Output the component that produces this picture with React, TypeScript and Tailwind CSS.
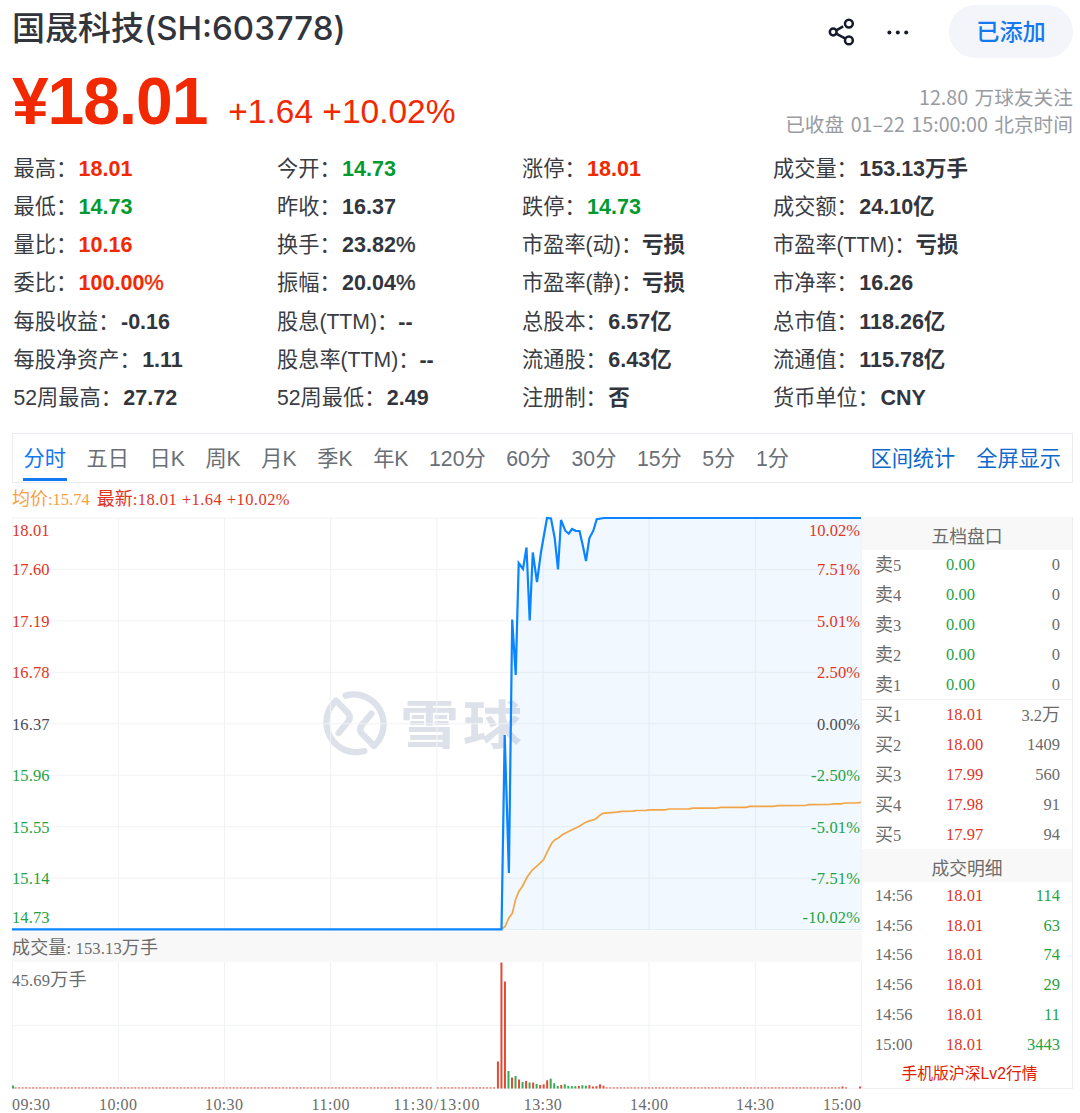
import React from 'react';
import clsx from 'clsx';

type Tone = 'up' | 'down' | 'flat';

interface Stat {
  label: string;
  value: string;
  tone?: Tone;
}

const columns: { width: string; items: Stat[] }[] = [
  {
    width: 'w-[263.5px]',
    items: [
      { label: '最高', value: '18.01', tone: 'up' },
      { label: '最低', value: '14.73', tone: 'down' },
      { label: '量比', value: '10.16', tone: 'up' },
      { label: '委比', value: '100.00%', tone: 'up' },
      { label: '每股收益', value: '-0.16' },
      { label: '每股净资产', value: '1.11' },
      { label: '52周最高', value: '27.72' },
    ],
  },
  {
    width: 'w-[245px]',
    items: [
      { label: '今开', value: '14.73', tone: 'down' },
      { label: '昨收', value: '16.37' },
      { label: '换手', value: '23.82%' },
      { label: '振幅', value: '20.04%' },
      { label: '股息(TTM)', value: '--' },
      { label: '股息率(TTM)', value: '--' },
      { label: '52周最低', value: '2.49' },
    ],
  },
  {
    width: 'w-[251px]',
    items: [
      { label: '涨停', value: '18.01', tone: 'up' },
      { label: '跌停', value: '14.73', tone: 'down' },
      { label: '市盈率(动)', value: '亏损' },
      { label: '市盈率(静)', value: '亏损' },
      { label: '总股本', value: '6.57亿' },
      { label: '流通股', value: '6.43亿' },
      { label: '注册制', value: '否' },
    ],
  },
  {
    width: 'w-[290px]',
    items: [
      { label: '成交量', value: '153.13万手' },
      { label: '成交额', value: '24.10亿' },
      { label: '市盈率(TTM)', value: '亏损' },
      { label: '市净率', value: '16.26' },
      { label: '总市值', value: '118.26亿' },
      { label: '流通值', value: '115.78亿' },
      { label: '货币单位', value: 'CNY' },
    ],
  },
];

const tabs = ['分时', '五日', '日K', '周K', '月K', '季K', '年K', '120分', '60分', '30分', '15分', '5分', '1分'];

const asks = ['5', '4', '3', '2', '1'];
const bids = [
  { level: '1', price: '18.01', volume: '3.2', unit: '万' },
  { level: '2', price: '18.00', volume: '1409' },
  { level: '3', price: '17.99', volume: '560' },
  { level: '4', price: '17.98', volume: '91' },
  { level: '5', price: '17.97', volume: '94' },
];

const trades = [
  { time: '14:56', price: '18.01', volume: '114' },
  { time: '14:56', price: '18.01', volume: '63' },
  { time: '14:56', price: '18.01', volume: '74' },
  { time: '14:56', price: '18.01', volume: '29' },
  { time: '14:56', price: '18.01', volume: '11' },
  { time: '15:00', price: '18.01', volume: '3443' },
];

const RED = '#e0351f';
const GREEN = '#1fa342';
const GRAY = '#6b6b6b';

const levels = [
  { y: 530.5, price: '18.01', pct: '10.02%', w: 51, color: RED },
  { y: 569.5, price: '17.60', pct: '7.51%', w: 43, color: RED },
  { y: 621, price: '17.19', pct: '5.01%', w: 43, color: RED },
  { y: 672.5, price: '16.78', pct: '2.50%', w: 43, color: RED },
  { y: 724, price: '16.37', pct: '0.00%', w: 43, color: '#4a4d55' },
  { y: 775.5, price: '15.96', pct: '-2.50%', w: 49, color: GREEN },
  { y: 827, price: '15.55', pct: '-5.01%', w: 49, color: GREEN },
  { y: 878.5, price: '15.14', pct: '-7.51%', w: 49, color: GREEN },
  { y: 917, price: '14.73', pct: '-10.02%', w: 57.5, color: GREEN },
];

const times = [
  { x: 12, label: '09:30', anchor: 'start', w: 38 },
  { x: 118, label: '10:00', anchor: 'middle', w: 38 },
  { x: 224, label: '10:30', anchor: 'middle', w: 38 },
  { x: 330.5, label: '11:00', anchor: 'middle', w: 38 },
  { x: 436.5, label: '11:30/13:00', anchor: 'middle', w: 86 },
  { x: 542.8, label: '13:30', anchor: 'middle', w: 38 },
  { x: 649, label: '14:00', anchor: 'middle', w: 38 },
  { x: 755, label: '14:30', anchor: 'middle', w: 38 },
  { x: 861, label: '15:00', anchor: 'end', w: 38 },
] as const;

const pricePoints =
  '12,929.3 501.5,929.3 504.7,735 508.9,873 512.2,619.5 515.7,675 518.7,563 523,569 526.5,547.5 529.7,620.5 532.8,552.5 537,582 541,552 547,518 551,518.5 554.7,538 558,569.5 561,520 565.3,530.7 568.7,533.7 572,529 575.7,530.8 579.5,531 582.7,545 586,561 589.3,538.3 593.3,530.7 596.7,519.2 604,518 861,518';

const avgPoints =
  '502.3,928.7 505,926.5 509,917.7 512.3,913.3 515.7,899.3 518.7,891.7 522.3,886.5 527,877.3 532.3,870 537.7,865.3 543.5,859.8 547.7,851 551.7,843.3 554.7,840 558.3,838 562.7,834.5 570,830.7 579.3,826.3 584,823.2 589.3,820.8 592.7,820.2 596,818.7 599.3,815.7 602.7,813.4 608,812.8 617,812.2 622,811.4 633,811.1 637,810.5 646,810.4 650,809.9 665,809.8 669,809 689,808.9 693,808.2 716,808.1 721,807.4 746,807.3 750,806.4 773,806.3 778,805.6 805,805.5 809,804.7 829,804.5 834,803.9 841,803.8 845,803 856,803 861,802.4';

// 13:10 之后有明显成交的分钟: [柱高, 是否上涨]
const activeBars: [number, boolean][] = [
  [27, true], [126, true], [107, true], [17.5, false], [11, true], [12.5, false], [9, true],
  [6.5, false], [7.5, true], [6, false], [6, true], [4.5, false], [3.5, true], [4.2, true],
  [8.2, true], [9.8, false], [5.2, false], [2.6, false], [3.5, true], [4.2, false], [2.6, false],
  [2.4, false], [2.4, false], [2.6, true], [3.3, false], [2.8, false], [3.3, true], [2, true],
  [2.4, true], [4.2, true], [2.7, true],
];

const bars = Array.from({ length: 242 }, (_, i) => {
  const x = 12 + i * 3.519;
  if (i === 0) return { x: x + 1, h: 3, up: false };
  const active = activeBars[i - 138];
  if (active) return { x: x + 0.3, h: active[0], up: active[1] };
  if (i === 120 || (i > 237 && i < 241)) return { x, h: 0, up: true };
  return { x, h: i === 236 || i === 241 ? 2 : 1.2, up: true };
});

const StatValue: React.FC<{ value: string; tone?: Tone }> = ({ value, tone = 'flat' }) => {
  const hasPercent = value.endsWith('%');
  return (
    <span
      className={clsx(
        'text-[21.5px] font-bold',
        tone === 'up' && 'text-[#f22800]',
        tone === 'down' && 'text-[#009a30]',
        tone === 'flat' && 'text-[#33353c]',
      )}
    >
      {hasPercent ? value.slice(0, -1) : value}
      {hasPercent && <span className="text-[22px] font-normal [-webkit-text-stroke:0.4px]">%</span>}
    </span>
  );
};

const Header: React.FC = () => (
  <header className="flex h-[150px] justify-between">
    <div>
      <h1 className="mt-[3px] h-[50px] whitespace-nowrap font-['Inter','Noto_Sans_CJK_SC',sans-serif] text-[33px] font-medium leading-[50px] text-[#33353c]">
        国晟科技(SH:603778)
      </h1>
      <div className="flex items-baseline whitespace-nowrap text-[#f22800]">
        <strong className="text-[66px] font-bold leading-[96px] tracking-[-1.1px]">¥18.01</strong>
        <span className="relative -top-px ml-[21px] text-[33.5px]">+1.64 +10.02%</span>
      </div>
    </div>
    <div className="flex flex-col items-end pt-[5px]">
      <div className="flex items-center">
        <svg width="28" height="28" viewBox="0 0 28 28" fill="none" stroke="#15192a" strokeWidth="2.5" className="mr-[30px]">
          <circle cx="5.2" cy="14" r="3.4" />
          <circle cx="20.9" cy="5.6" r="3.9" />
          <circle cx="20.9" cy="22.4" r="3.9" />
          <path d="M8.2 12.3l7-3.9M8.2 15.7l9.2 5" />
        </svg>
        <svg width="24" height="6" viewBox="0 0 24 6" fill="#15192a" className="mr-[39px]">
          <circle cx="3.4" cy="3.4" r="2" />
          <circle cx="11.8" cy="3.4" r="2" />
          <circle cx="20.2" cy="3.4" r="2" />
        </svg>
        <button className="h-[53px] w-[124px] rounded-full bg-[#f3f5fa] pt-[2px] text-[23.2px] font-medium text-[#1478f0]">
          已添加
        </button>
      </div>
      <div className="mt-[26px] text-right font-['Noto_Sans_CJK_SC',sans-serif] text-[19.7px] leading-[26.5px] text-[#999ba2] [word-spacing:2px]">
        <p>12.80 万球友关注</p>
        <p>已收盘 01–22 15:00:00 北京时间</p>
      </div>
    </div>
  </header>
);

const Stats: React.FC = () => (
  <section className="flex h-[283px] pl-[1.5px] text-[21.2px] text-[#3a3c43]">
    {columns.map((column) => (
      <div key={column.items[0].label} className={clsx('shrink-0 whitespace-nowrap', column.width)}>
        {column.items.map((item) => (
          <div key={item.label} className="h-[38.15px] leading-[38.15px]">
            <span className={clsx(!item.label.includes('(') && 'mr-[1.5px]')}>{item.label}：</span>
            <StatValue value={item.value} tone={item.tone} />
          </div>
        ))}
      </div>
    ))}
  </section>
);

const TabBar: React.FC = () => (
  <nav className="flex h-[50px] justify-between border-[1.5px] border-[#ebecf1] pl-[9.5px] pr-[11px] text-[21.2px] text-[#6a6e75]">
    <div className="flex gap-[20.6px]">
      {tabs.map((tab, i) => (
        <div
          key={tab}
          className={clsx(
            'flex h-[47px] items-center whitespace-nowrap',
            i === 0 ? '-mr-px border-b-[3px] border-[#1478f0] px-[1px] pt-[6px] text-[#1478f0]' : 'pt-[3px]',
          )}
        >
          {tab}
        </div>
      ))}
    </div>
    <div className="flex items-center gap-[21px] pt-[2px] text-[#0f69cc]">
      <span>区间统计</span>
      <span>全屏显示</span>
    </div>
  </nav>
);

const Watermark: React.FC = () => (
  <g>
    <g transform="translate(300 670) scale(0.3333)" fill="none" stroke="#dce1ea" strokeWidth="19" strokeLinecap="round" strokeLinejoin="round">
      <path d="M193 243A89 89 0 0 1 108 92L144 129Q154 141 145 154L116 189" />
      <path d="M137 77A89 89 0 0 1 222 228L186 191Q176 179 185 166L214 131" />
    </g>
    <text
      transform="translate(400 743.5) scale(1 0.88)"
      fill="#dce1ea"
      fontSize="59"
      fontWeight="700"
      textLength="122"
      fontFamily="'Noto Sans CJK SC', sans-serif"
    >
      雪球
    </text>
  </g>
);

const Chart: React.FC = () => (
  <svg
    width="850"
    height="600"
    viewBox="12 513 850 600"
    className="block shrink-0 font-['Liberation_Serif','Noto_Sans_CJK_SC',serif]"
    fontSize="16.5"
  >
    <Watermark />

    {/* 网格 */}
    <rect x="12" y="931" width="850" height="31" fill="#f8f8f8" />
    <g stroke="#f1f2f4" strokeWidth="1">
      {Array.from({ length: 9 }, (_, i) => (
        <path key={i} d={`M12 ${518 + i * 51.45}H861.5`} />
      ))}
      {Array.from({ length: 9 }, (_, i) => (
        <path key={i} d={`M${12.2 + i * 106.15} 518V930M${12.2 + i * 106.15} 962V1088`} />
      ))}
      <path d="M12 1025.3H861.5M12 1088.5H861.5" />
    </g>

    {/* 分时线与均价线 */}
    <polygon points={`${pricePoints} 861,930 12,930`} fill="#0a84ff" fillOpacity="0.06" />
    <polyline points={avgPoints} fill="none" stroke="#f2a548" strokeWidth="1.7" />
    <polyline points={pricePoints} fill="none" stroke="#0a84ff" strokeWidth="2.2" strokeMiterlimit="4" />

    {levels.map((level) => (
      <g key={level.price} fill={level.color}>
        <text x="12" y={level.y + 5.5} textLength="37.5">{level.price}</text>
        <text x={860 - level.w} y={level.y + 5.5} textLength={level.w}>{level.pct}</text>
      </g>
    ))}

    {/* 成交量 */}
    <g fill={GRAY}>
      <text x="12" y="953.5" textLength="146"><tspan fontSize="18">成交量</tspan>: 153.13<tspan fontSize="18">万手</tspan></text>
      <text x="12" y="986" textLength="74.5">45.69<tspan fontSize="18">万手</tspan></text>
    </g>
    {bars.map((bar, i) => (
      <rect key={i} x={bar.x - 1} y={1088.5 - bar.h} width="2" height={bar.h} fill={bar.up ? RED : GREEN} fillOpacity={bar.h < 1.5 ? 0.75 : 0.9} />
    ))}
    {times.map((time) => (
      <text key={time.label} x={time.x} y="1109.5" fontSize="16" textAnchor={time.anchor} textLength={time.w} fill={GRAY}>
        {time.label}
      </text>
    ))}
  </svg>
);

const PanelTitle: React.FC<{ children: React.ReactNode }> = ({ children }) => (
  <div className="flex h-[33px] items-center justify-center bg-[#f8f8f8] pt-[7px] text-[17.8px]">{children}</div>
);

const PanelRow: React.FC<{
  label: React.ReactNode;
  price: string;
  volume: React.ReactNode;
  priceClass: string;
  volumeClass?: string;
}> = ({ label, price, volume, priceClass, volumeClass }) => (
  <div className="flex h-[29.8px] items-center pl-[13px] pr-[12px] pt-[1.5px] leading-none">
    <span className="w-[71px]">{label}</span>
    <span className={priceClass}>{price}</span>
    <span className={clsx('ml-auto', volumeClass)}>{volume}</span>
  </div>
);

const OrderPanel: React.FC = () => (
  <aside className="mt-[4px] flex h-[572px] w-[211px] flex-col border-b border-r border-[#eeeff1] font-['Liberation_Serif','Noto_Sans_CJK_SC',serif] text-[16.5px] text-[#6b6b6b]">
    <PanelTitle>五档盘口</PanelTitle>
    {asks.map((level) => (
      <PanelRow
        key={level}
        label={<><span className="text-[18px]">卖</span>{level}</>}
        price="0.00"
        volume="0"
        priceClass="text-[#1fa342]"
      />
    ))}
    <div className="h-px bg-[#f1f2f4]" />
    {bids.map((bid) => (
      <PanelRow
        key={bid.level}
        label={<><span className="text-[18px]">买</span>{bid.level}</>}
        price={bid.price}
        volume={<>{bid.volume}{bid.unit && <span className="text-[18px]">{bid.unit}</span>}</>}
        priceClass="text-[#e0351f]"
      />
    ))}
    <PanelTitle>成交明细</PanelTitle>
    <div className="-mt-[1.5px]">
      {trades.map((trade, i) => (
        <PanelRow
          key={i}
          label={trade.time}
          price={trade.price}
          volume={trade.volume}
          priceClass="text-[#e0351f]"
          volumeClass="text-[#1fa342]"
        />
      ))}
    </div>
    <a className="mt-[2px] pl-[5px] text-center font-['Liberation_Sans','Noto_Sans_CJK_SC',sans-serif] text-[15.8px] leading-[26px] text-[#e02000]">
      手机版沪深Lv2行情
    </a>
  </aside>
);

const App: React.FC = () => {
  return (
    <div className="h-[1113px] w-[1080px] bg-white pl-[12px] pr-[7px] font-['Liberation_Sans','Noto_Sans_CJK_SC',sans-serif]">
      <Header />
      <Stats />
      <TabBar />
      <div className="flex h-[30px] items-center gap-[7px] whitespace-nowrap pt-[2px] font-['Liberation_Serif','Noto_Sans_CJK_SC',serif] text-[16.5px]">
        <span className="text-[#f9a03c]"><span className="text-[18px]">均价</span>:15.74</span>
        <span className="tracking-[0.45px] text-[#e0351f]"><span className="text-[18px] tracking-normal">最新</span>:18.01 +1.64 +10.02%</span>
      </div>
      <main className="flex">
        <Chart />
        <OrderPanel />
      </main>
    </div>
  );
};

export default App;
